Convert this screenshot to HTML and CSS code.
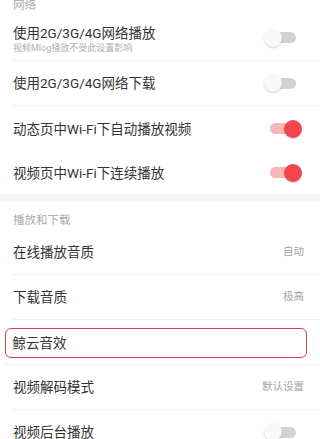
FILE: index.html
```html
<!DOCTYPE html>
<html lang="zh-CN">
<head>
<meta charset="utf-8">
<link rel="stylesheet" href="styles.css">
</head>
<body>
<div class="page">
  <div class="section-head">网络</div>
  <div class="row row-tall">
    <div class="text-block">
      <div class="title">使用2G/3G/4G网络播放</div>
      <div class="sub">视频Mlog播放不受此设置影响</div>
    </div>
    <span class="switch"><span class="track"></span><span class="thumb"></span></span>
  </div>
  <div class="row">
    <div class="title">使用2G/3G/4G网络下载</div>
    <span class="switch"><span class="track"></span><span class="thumb"></span></span>
  </div>
  <div class="row row-plain">
    <div class="title">动态页中Wi-Fi下自动播放视频</div>
    <span class="switch on"><span class="track"></span><span class="thumb"></span></span>
  </div>
  <div class="row row-plain row-last">
    <div class="title">视频页中Wi-Fi下连续播放</div>
    <span class="switch on"><span class="track"></span><span class="thumb"></span></span>
  </div>
  <div class="band"></div>
  <div class="section-head">播放和下载</div>
  <div class="row">
    <div class="title">在线播放音质</div>
    <div class="value">自动</div>
  </div>
  <div class="row">
    <div class="title">下载音质</div>
    <div class="value">极高</div>
  </div>
  <div class="row row-boxed">
    <div class="box"><div class="title">鲸云音效</div></div>
  </div>
  <div class="row">
    <div class="title">视频解码模式</div>
    <div class="value">默认设置</div>
  </div>
  <div class="row">
    <div class="title">视频后台播放</div>
    <span class="switch"><span class="track"></span><span class="thumb"></span></span>
  </div>
</div>
</body>
</html>
```

FILE: styles.css
```css
html, body {
  margin: 0;
  padding: 0;
  background: #ffffff;
}
body {
  width: 320px;
  height: 439px;
  overflow: hidden;
  font-family: Roboto, "Noto Sans CJK SC", "Noto Sans", sans-serif;
  color: #333333;
}
.page {
  margin-top: -13px;
}
.section-head {
  height: 28px;
  box-sizing: border-box;
  padding: 11px 0 0 13px;
  font-size: 11.5px;
  line-height: 14px;
  color: #ababab;
}
.row {
  position: relative;
  height: 45px;
  box-sizing: border-box;
  margin-left: 13px;
  padding-right: 16px;
  border-bottom: 1px solid #f0f0f0;
  display: flex;
  align-items: center;
  justify-content: space-between;
}
.row-tall {
  height: 46px;
}
.row-plain {
  border-bottom: none;
}
.row-last {
  height: 43px;
}
.title {
  font-size: 13.5px;
  line-height: 18px;
  color: #333333;
  white-space: nowrap;
}
.text-block {
  padding-top: 3px;
  display: flex;
  flex-direction: column;
}
.sub {
  font-size: 9px;
  line-height: 12px;
  color: #b0b0b0;
  white-space: nowrap;
}
.value {
  font-size: 10.5px;
  line-height: 14px;
  color: #a3a3a3;
}
.band {
  height: 8px;
  background: #f5f5f5;
}
.row-boxed {
  margin-left: 5px;
  padding: 8px 13px 6px 0;
  align-items: stretch;
}
.box {
  flex: 1;
  border: 1.5px solid #d9434b;
  border-radius: 6px;
  display: flex;
  align-items: center;
  padding-left: 6.5px;
}
.switch {
  position: relative;
  width: 38px;
  height: 20px;
  margin-right: 2px;
  flex: none;
}
.track {
  position: absolute;
  left: 6px;
  right: 6px;
  top: 4.5px;
  height: 11px;
  border-radius: 6px;
  background: #d3d3d3;
}
.thumb {
  position: absolute;
  left: 0;
  top: 1px;
  width: 18px;
  height: 18px;
  border-radius: 50%;
  background: #f8f8f8;
  box-shadow: 0 1px 2px rgba(0, 0, 0, 0.18);
}
.switch.on .track {
  background: #f9b7b9;
}
.switch.on .thumb {
  left: auto;
  right: 0;
  background: #f0474d;
  box-shadow: 0 1px 2px rgba(150, 0, 0, 0.2);
}
```
